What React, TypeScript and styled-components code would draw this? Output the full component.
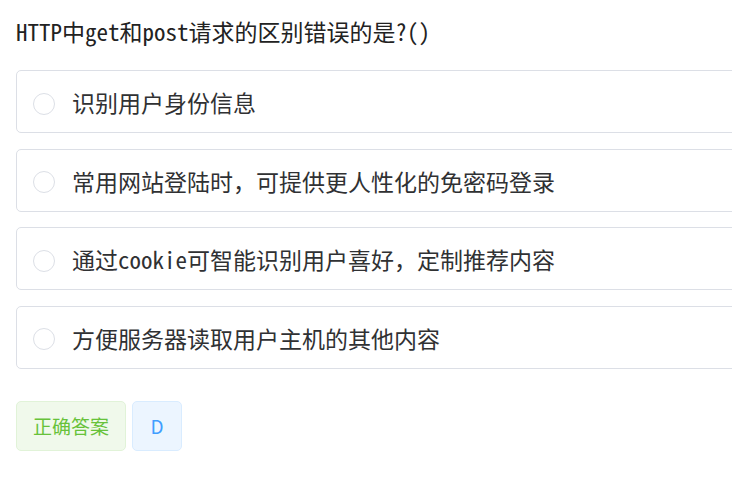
import React from "react";
import styled, { createGlobalStyle } from "styled-components";

const GlobalStyle = createGlobalStyle`
  html, body {
    margin: 0;
    padding: 0;
    background: #ffffff;
    overflow: hidden;
  }
`;

const monoCjk = `"Noto Sans Mono CJK SC", "Liberation Mono", "Noto Sans CJK SC", monospace`;

const Page = styled.div`
  padding: 14px 0 0 16px;
  width: 800px;
`;

const Question = styled.div`
  font-family: ${monoCjk};
  font-size: 23px;
  line-height: 34px;
  color: #222222;
  margin-bottom: 22px;
  white-space: nowrap;
`;

const OptionList = styled.div`
  display: flex;
  flex-direction: column;
  gap: 15.67px;
`;

const OptionRow = styled.label`
  box-sizing: border-box;
  display: flex;
  align-items: center;
  gap: 17px;
  height: 63px;
  padding: 0 16px;
  border: 1px solid #dcdfe6;
  border-radius: 5px;
  background: #ffffff;
`;

const Radio = styled.span`
  box-sizing: border-box;
  width: 22px;
  height: 22px;
  margin-top: 4px;
  border: 1px solid #dcdfe6;
  border-radius: 50%;
  background: #ffffff;
  flex: none;
`;

const OptionText = styled.span`
  font-family: ${monoCjk};
  font-size: 23px;
  line-height: 30px;
  color: #303133;
  white-space: nowrap;
  padding-top: 1px;
`;

const AnswerBar = styled.div`
  display: flex;
  gap: 6px;
  margin-top: 32px;
`;

const Tag = styled.span<{ $tone: "success" | "primary"; $w: number }>`
  box-sizing: border-box;
  display: inline-flex;
  align-items: center;
  justify-content: center;
  width: ${(p) => p.$w}px;
  height: 50px;
  border-radius: 5px;
  font-family: "Noto Sans CJK SC", "Inter", sans-serif;
  font-size: 19px;
  border: 1px solid ${(p) => (p.$tone === "success" ? "#e1f3d8" : "#d9ecff")};
  background: ${(p) => (p.$tone === "success" ? "#f0f9eb" : "#ecf5ff")};
  color: ${(p) => (p.$tone === "success" ? "#67c23a" : "#409eff")};
`;

const options = [
  "识别用户身份信息",
  "常用网站登陆时，可提供更人性化的免密码登录",
  "通过cookie可智能识别用户喜好，定制推荐内容",
  "方便服务器读取用户主机的其他内容",
];

export default function App() {
  return (
    <>
      <GlobalStyle />
      <Page>
        <Question>HTTP中get和post请求的区别错误的是?()</Question>
        <OptionList>
          {options.map((text) => (
            <OptionRow key={text}>
              <Radio />
              <OptionText>{text}</OptionText>
            </OptionRow>
          ))}
        </OptionList>
        <AnswerBar>
          <Tag $tone="success" $w={110}>正确答案</Tag>
          <Tag $tone="primary" $w={50}>D</Tag>
        </AnswerBar>
      </Page>
    </>
  );
}
